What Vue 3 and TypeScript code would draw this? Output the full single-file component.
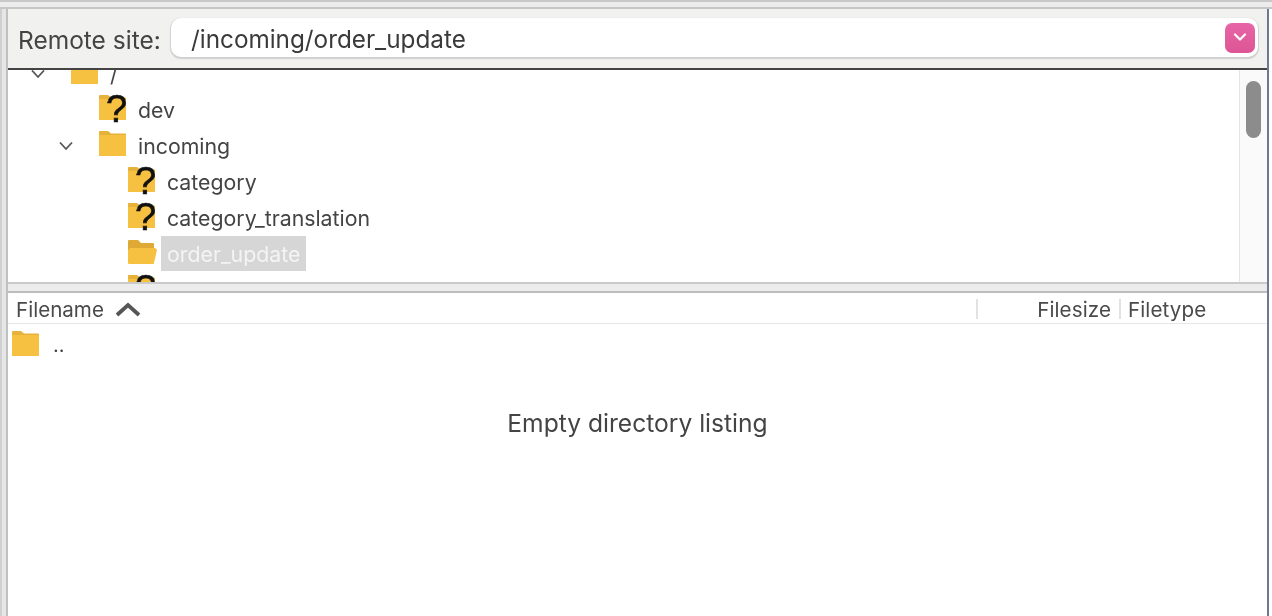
<script setup lang="ts">
interface Row { name: string; depth: number; icon: 'folder' | 'unknown' | 'open'; chevron?: boolean; selected?: boolean }
const rows: Row[] = [
  { name: '/', depth: 0, icon: 'folder', chevron: true },
  { name: 'dev', depth: 1, icon: 'unknown' },
  { name: 'incoming', depth: 1, icon: 'folder', chevron: true },
  { name: 'category', depth: 2, icon: 'unknown' },
  { name: 'category_translation', depth: 2, icon: 'unknown' },
  { name: 'order_update', depth: 2, icon: 'open', selected: true },
  { name: 'export', depth: 2, icon: 'unknown' },
]
</script>

<template>
  <div class="window">
    <div class="top-strip"></div>
    <div class="body">
      <div class="gutter"></div>
      <div class="content">
        <header class="site-bar">
          <label class="site-label">Remote site:</label>
          <div class="site-input">
            <span class="site-path">/incoming/order_update</span>
            <span class="dropdown">
              <svg width="14" height="9" viewBox="0 0 14 9"><path d="M2 1.500 7 6.500l5-5" fill="none" stroke="#fff" stroke-width="2.200" stroke-linecap="round" stroke-linejoin="round"/></svg>
            </span>
          </div>
        </header>
        <section class="tree-pane">
          <div class="tree">
            <div class="tree-scroll">
              <div v-for="row in rows" :key="row.name" class="row" :class="'depth-' + row.depth">
                <span class="chevron">
                  <svg v-if="row.chevron" width="16" height="10" viewBox="0 0 16 10"><path d="M2 1.500 8 8l6-6.500" fill="none" stroke="#555" stroke-width="1.800" stroke-linejoin="round"/></svg>
                </span>
                <span class="icon">
                  <svg width="29" height="36" viewBox="0 0 29 36">
                    <template v-if="row.icon === 'open'">
                      <path d="M0 3a1 1 0 0 1 1-1h9l3 3h12a1 1 0 0 1 1 1v6H0z" fill="#dfa935"/>
                      <path d="M2 10h25l2 1.500-3 13.500a1 1 0 0 1-1 1H1a1 1 0 0 1-1-1V12z" fill="#f6c040"/>
                    </template>
                    <template v-else>
                      <path d="M0 2a1 1 0 0 1 1-1h8l3 2.500h14a1 1 0 0 1 1 1V25a1 1 0 0 1-1 1H1a1 1 0 0 1-1-1z" fill="#e6b23a"/>
                      <path d="M0 5h27v20a1 1 0 0 1-1 1H1a1 1 0 0 1-1-1z" fill="#f6c040"/>
                    </template>
                  </svg>
                  <span v-if="row.icon === 'unknown'" class="question">?</span>
                </span>
                <span class="name" :class="{ selected: row.selected }">{{ row.name }}</span>
              </div>
            </div>
          </div>
          <div class="scrollbar"><div class="thumb"></div></div>
        </section>
        <div class="splitter"></div>
        <section class="list-pane">
          <div class="list-header">
            <div class="col col-name">
              <span>Filename</span>
              <svg width="26" height="15" viewBox="0 0 26 15"><path d="M2 13 13 3l11 10" fill="none" stroke="#555" stroke-width="3.800"/></svg>
            </div>
            <div class="col col-size">Filesize</div>
            <div class="col col-type">Filetype</div>
          </div>
          <div class="list-body">
            <div class="parent-row">
              <svg class="parent-icon" width="28" height="27" viewBox="0 0 28 27">
                <path d="M0 2a1 1 0 0 1 1-1h8l3 2.500h14a1 1 0 0 1 1 1V25a1 1 0 0 1-1 1H1a1 1 0 0 1-1-1z" fill="#e6b23a"/>
                <path d="M0 5h27v20a1 1 0 0 1-1 1H1a1 1 0 0 1-1-1z" fill="#f6c040"/>
              </svg>
              <span>..</span>
            </div>
            <p class="empty">Empty directory listing</p>
          </div>
        </section>
      </div>
      <div class="edge"></div>
    </div>
  </div>
</template>

<style>
html, body { margin: 0; background: #fff; overflow: hidden; }
</style>

<style scoped>
.window {
  width: 1272px;
  height: 616px;
  display: flex;
  flex-direction: column;
  background: #fff;
  color: #3e3e3e;
  font-family: Inter, "Liberation Sans", sans-serif;
  font-size: 20px;
  filter: blur(0.55px);
  overflow: hidden;
}
.top-strip {
  height: 9px;
  flex: none;
  box-sizing: border-box;
  background: #ececec;
  border-top: 2px solid #c8c8c8;
  border-bottom: 2px solid #c6c6c6;
}
.body { flex: 1; display: flex; min-height: 0; }
.gutter {
  width: 8px;
  flex: none;
  box-sizing: border-box;
  background: #e6e6e6;
  border-left: 2px solid #cfcfcf;
  border-right: 2px solid #c0c0c0;
}
.content { flex: 1; min-width: 0; display: flex; flex-direction: column; }
.edge { width: 5px; flex: none; background: #fff; border-left: 2px solid #6b7a93; box-sizing: border-box; }
.site-bar {
  height: 61px;
  flex: none;
  box-sizing: border-box;
  display: flex;
  align-items: center;
  padding: 0 9px 0 10px;
  background: #f1f1f0;
  border-bottom: 2px solid #444;
}
.site-label { font-size: 24.500px; width: 153px; flex: none; color: #444; margin-top: 2px; }
.site-input {
  flex: 1;
  height: 39px;
  margin-top: -2px;
  box-sizing: border-box;
  display: flex;
  align-items: center;
  justify-content: space-between;
  padding: 0 3px 0 20px;
  background: #fff;
  border-radius: 10px;
  box-shadow: 0 1px 1px 1px #d0d0d0;
}
.site-path { font-size: 24.300px; color: #3a3a3a; margin-top: 2px; }
.dropdown {
  width: 30px;
  height: 30px;
  border-radius: 7px;
  display: flex;
  align-items: center;
  justify-content: center;
  background: linear-gradient(#e765a8, #dd5594);
}
.tree-pane { height: 212px; flex: none; display: flex; overflow: hidden; }
.tree { flex: 1; overflow: hidden; }
.tree-scroll { margin-top: -12px; }
.row { height: 36px; display: flex; align-items: center; }
.depth-0 { padding-left: 21px; }
.depth-1 { padding-left: 49px; }
.depth-2 { padding-left: 78px; }
.chevron { width: 42px; flex: none; display: flex; margin-top: -5px; padding-left: 1px; box-sizing: border-box; }
.icon { position: relative; width: 29px; height: 36px; flex: none; margin-right: 9px; }
.question {
  position: absolute;
  left: 7px;
  top: -7px;
  font: 400 38px/44px "Liberation Sans", sans-serif;
  -webkit-text-stroke: 0.6px #111;
  color: #111;
}
.name {
  font-size: 21.300px;
  color: #444;
  padding: 4.500px 6px 3.500px;
  margin-left: -5px;
  margin-top: -5px;
  line-height: 27px;
}
.name.selected { background: #d6d6d6; color: #f4f4f4; }
.scrollbar {
  width: 28px;
  flex: none;
  box-sizing: border-box;
  background: #fafafa;
  border-left: 1px solid #e4e4e4;
  padding: 11px 0 0 6px;
}
.thumb { width: 15px; height: 57px; border-radius: 8px; background: #8c8c8c; }
.splitter {
  height: 11px;
  flex: none;
  box-sizing: border-box;
  background: #ececec;
  border-top: 2px solid #cacaca;
  border-bottom: 2px solid #bdbdbd;
}
.list-pane { flex: 1; display: flex; flex-direction: column; min-height: 0; }
.list-header {
  height: 31px;
  flex: none;
  box-sizing: border-box;
  display: flex;
  align-items: center;
  border-bottom: 1px solid #e6e6e6;
  font-size: 20.600px;
  color: #4a4a4a;
  padding-top: 2px;
}
.col { height: 20px; display: flex; align-items: center; box-sizing: border-box; }
.col-name { width: 970px; padding-left: 8px; gap: 11px; border-right: 2px solid #e2e2e2; }
.col-size { width: 143px; justify-content: flex-end; padding-right: 8px; border-right: 2px solid #e2e2e2; letter-spacing: 0.1px; }
.col-type { padding-left: 7px; letter-spacing: 0.1px; }
.list-body { flex: 1; }
.parent-row { display: flex; align-items: center; gap: 13px; padding: 6px 0 0 3px; height: 36px; box-sizing: border-box; color: #444; }
.parent-icon { margin: -4px 0 0 1px; }
.empty {
  margin: 0;
  padding-top: 48px;
  text-align: center;
  width: 1259px;
  font-size: 24.600px;
  line-height: 30px;
  color: #444;
}
</style>
